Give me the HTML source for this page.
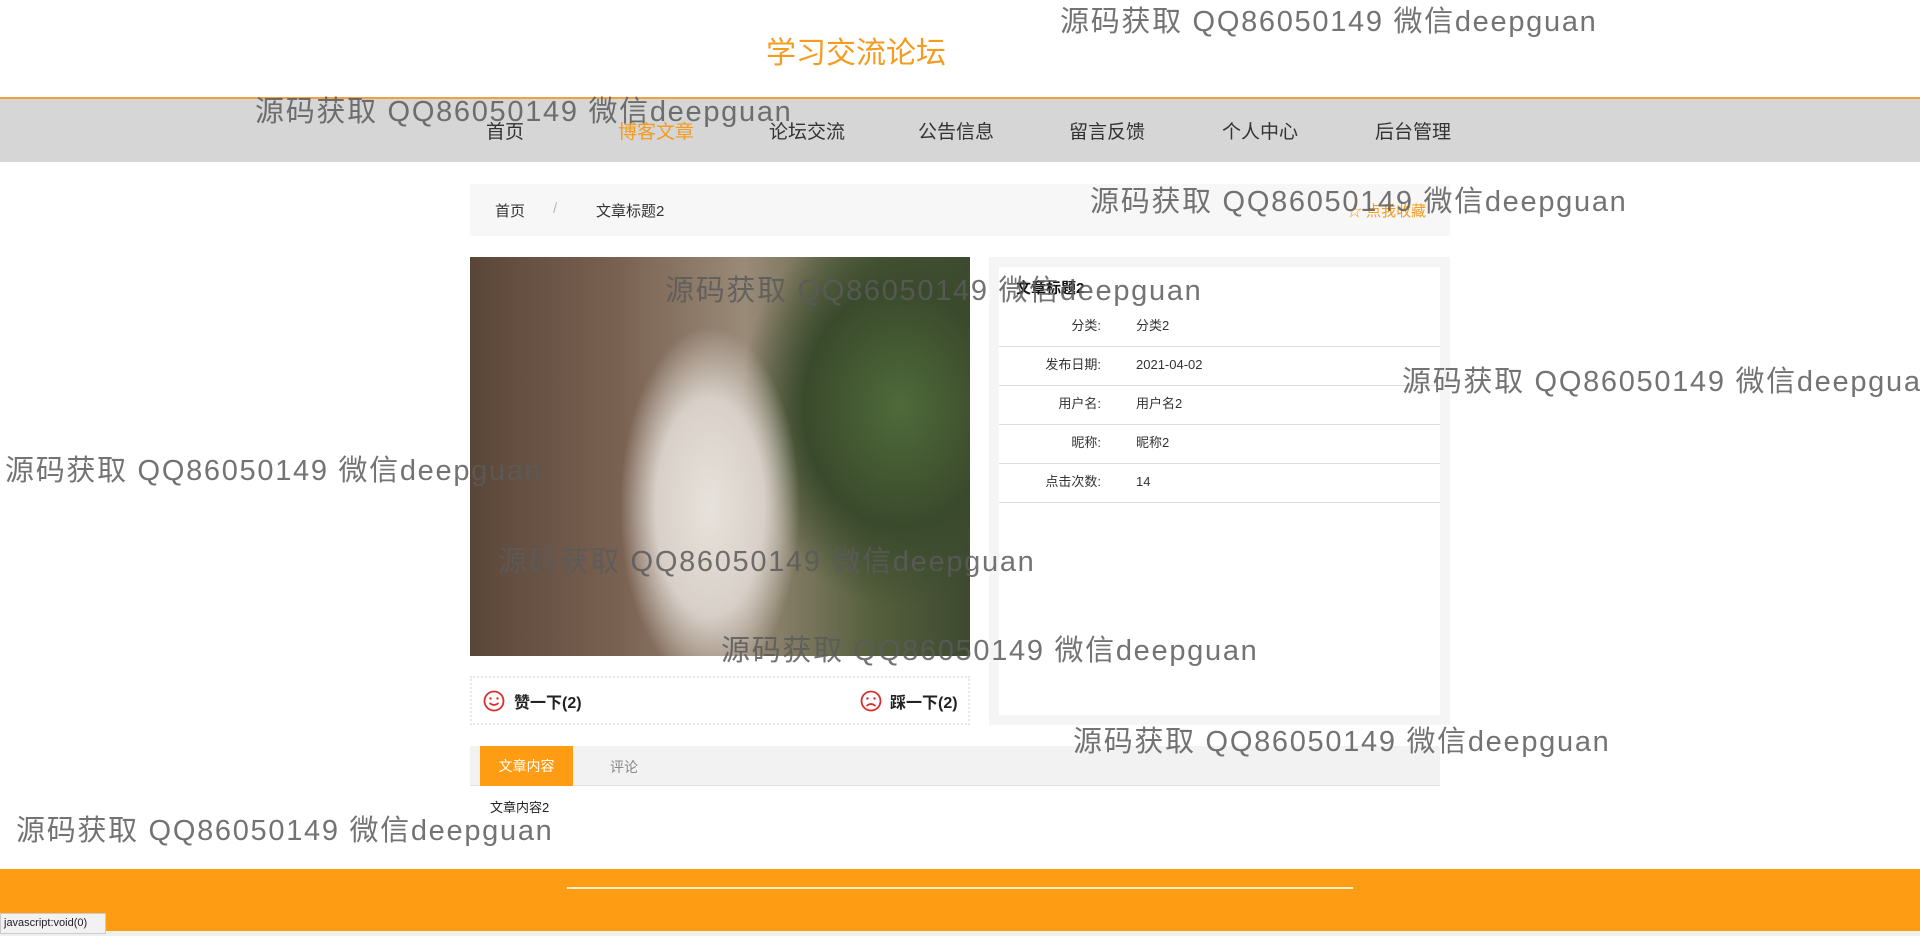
<!DOCTYPE html>
<html><head><meta charset="utf-8"><style>
*{margin:0;padding:0;box-sizing:border-box}
body{width:1920px;height:936px;overflow:hidden;background:#fff;font-family:"Liberation Sans","Noto Sans CJK SC",sans-serif;position:relative;color:#333}
.a{position:absolute;white-space:nowrap}
.title{left:0;width:1712px;text-align:center;top:28px;font-size:30px;color:#f39c1f}
.nav{left:0;top:97px;width:1920px;height:65px;background:#d6d6d6;border-top:2px solid #f0a040}
.nav span{position:absolute;top:18px;font-size:19px;color:#333}
.bc{left:470px;top:184px;width:980px;height:52px;background:#f7f7f7;font-size:15px}
.img{left:470px;top:257px;width:500px;height:399px;background:
radial-gradient(ellipse 90px 180px at 240px 250px,#e8e2dc 0%,#d8d0c8 60%,transparent 100%),
radial-gradient(ellipse 160px 200px at 430px 150px,#4f6a3a 0%,#3a4a2c 60%,transparent 100%),
linear-gradient(90deg,#5a4638 0%,#7a6252 30%,#9a8a78 55%,#56603e 80%,#3e4a30 100%)}
.rp{left:989px;top:257px;width:461px;height:468px;background:#f5f5f5}
.rin{left:999px;top:267px;width:441px;height:448px;background:#fff}
.row{position:absolute;left:0;width:441px;height:39px;border-bottom:1px solid #ddd;font-size:13px;line-height:16px}
.row b{position:absolute;right:339px;top:10px;font-weight:normal;color:#333}
.row i{position:absolute;left:137px;top:10px;font-style:normal;color:#333}
.like{left:470px;top:676px;width:500px;height:49px;border:2px dotted #e6e6e6;font-size:16px;font-weight:bold;color:#222}
.tabs{left:470px;top:746px;width:970px;height:40px;background:#f2f2f2;border-bottom:1px solid #e2e2e2}
.foot{left:0;top:869px;width:1920px;height:62px;background:#fe9c14}
.wm{position:absolute;font-size:29px;letter-spacing:1.7px;color:rgba(90,90,90,.85);white-space:nowrap}
</style></head><body>
<div class="a title">学习交流论坛</div>
<div class="a nav">
<span style="left:486px">首页</span><span style="left:618px;color:#f39c1f">博客文章</span><span style="left:769px">论坛交流</span><span style="left:918px">公告信息</span><span style="left:1069px">留言反馈</span><span style="left:1222px">个人中心</span><span style="left:1375px">后台管理</span>
</div>
<div class="a bc"><span class="a" style="left:25px;top:16px">首页</span><span class="a" style="left:83px;top:16px;color:#bbb">/</span><span class="a" style="left:126px;top:16px">文章标题2</span><span class="a" style="left:877px;top:16px;color:#f39c1f">☆ 点我收藏</span></div>
<div class="a img"></div>
<div class="a rp"></div>
<div class="a rin">
<div class="a" style="left:17px;top:10px;font-size:15px;font-weight:bold;color:#111">文章标题2</div>
<div class="row" style="top:41px"><b>分类:</b><i>分类2</i></div>
<div class="row" style="top:80px"><b>发布日期:</b><i>2021-04-02</i></div>
<div class="row" style="top:119px"><b>用户名:</b><i>用户名2</i></div>
<div class="row" style="top:158px"><b>昵称:</b><i>昵称2</i></div>
<div class="row" style="top:197px"><b>点击次数:</b><i>14</i></div>
</div>
<div class="a like">
<svg class="a" style="left:11px;top:12px" width="22" height="22" viewBox="0 0 22 22"><circle cx="11" cy="11" r="9.5" fill="none" stroke="#d9302b" stroke-width="1.8"/><circle cx="7.5" cy="8.5" r="1.2" fill="#d9302b"/><circle cx="14.5" cy="8.5" r="1.2" fill="#d9302b"/><path d="M6.5 13 Q11 17 15.5 13" fill="none" stroke="#d9302b" stroke-width="1.6"/></svg>
<span class="a" style="left:42px;top:11px">赞一下(2)</span>
<svg class="a" style="left:388px;top:12px" width="22" height="22" viewBox="0 0 22 22"><circle cx="11" cy="11" r="9.5" fill="none" stroke="#d9302b" stroke-width="1.8"/><circle cx="7.5" cy="8.5" r="1.2" fill="#d9302b"/><circle cx="14.5" cy="8.5" r="1.2" fill="#d9302b"/><path d="M6.5 16 Q11 12 15.5 16" fill="none" stroke="#d9302b" stroke-width="1.6"/></svg>
<span class="a" style="left:418px;top:11px">踩一下(2)</span>
</div>
<div class="a tabs"><div class="a" style="left:10px;top:0;width:93px;height:40px;background:#fe9c14;color:#fff;font-size:14px;text-align:center;line-height:40px">文章内容</div><span class="a" style="left:140px;top:11px;font-size:14px;color:#888">评论</span></div>
<div class="a" style="left:490px;top:797px;font-size:13px;color:#222">文章内容2</div>
<div class="a foot"><div class="a" style="left:567px;top:18px;width:786px;height:2px;background:#fff0c8"></div></div>
<div class="a" style="left:0;top:931px;width:1920px;height:5px;background:#eef0ee"></div>
<div class="a" style="left:0;top:913px;width:106px;height:21px;background:#f2f2f2;border:1px solid #ccc;font-size:11px;line-height:19px;padding-left:3px;color:#222">javascript:void(0)</div>
<div class="wm" style="left:1060px;top:-2px">源码获取 QQ86050149 微信deepguan</div>
<div class="wm" style="left:255px;top:88px">源码获取 QQ86050149 微信deepguan</div>
<div class="wm" style="left:1090px;top:178px">源码获取 QQ86050149 微信deepguan</div>
<div class="wm" style="left:665px;top:267px">源码获取 QQ86050149 微信deepguan</div>
<div class="wm" style="left:1402px;top:358px">源码获取 QQ86050149 微信deepguan</div>
<div class="wm" style="left:5px;top:447px">源码获取 QQ86050149 微信deepguan</div>
<div class="wm" style="left:498px;top:538px">源码获取 QQ86050149 微信deepguan</div>
<div class="wm" style="left:721px;top:627px">源码获取 QQ86050149 微信deepguan</div>
<div class="wm" style="left:1073px;top:718px">源码获取 QQ86050149 微信deepguan</div>
<div class="wm" style="left:16px;top:807px">源码获取 QQ86050149 微信deepguan</div>
</body></html>
